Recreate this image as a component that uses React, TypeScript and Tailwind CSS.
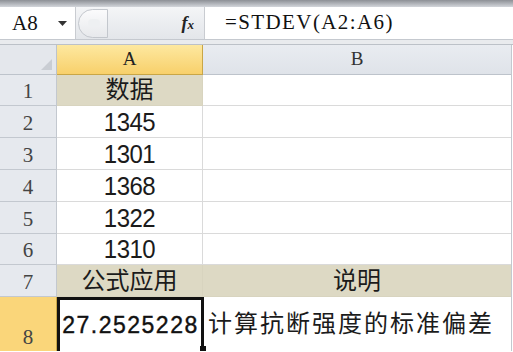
import React from 'react';

const serif = 'font-[family-name:Liberation_Serif,Times_New_Roman,serif]';
const cjk = 'font-[family-name:Liberation_Sans,Noto_Sans_CJK_SC,sans-serif]';

const rows: { n: number; a: string; b: string; h: string; fillA?: boolean; fillB?: boolean }[] = [
  { n: 1, a: '数据', b: '', h: 'h-[31px]', fillA: true },
  { n: 2, a: '1345', b: '', h: 'h-[32px]' },
  { n: 3, a: '1301', b: '', h: 'h-[32px]' },
  { n: 4, a: '1368', b: '', h: 'h-[32px]' },
  { n: 5, a: '1322', b: '', h: 'h-[32px]' },
  { n: 6, a: '1310', b: '', h: 'h-[31px]' },
  { n: 7, a: '公式应用', b: '说明', h: 'h-[32px]', fillA: true, fillB: true },
];

function CellText({ text }: { text: string }) {
  const isNum = /^\d+$/.test(text);
  if (isNum) {
    return (
      <span className="inline-block scale-y-[1.1] text-[24px] tracking-[-0.5px] text-[#1b1b1b] leading-none">
        {text}
      </span>
    );
  }
  return <span className="text-[24px] text-[#1b1b1b] leading-none">{text}</span>;
}

export default function App() {
  return (
    <div className={`w-[513px] h-[352px] overflow-hidden bg-white ${cjk}`}>
      {/* window chrome strip */}
      <div className="h-[7px] bg-gradient-to-b from-[#8d9096] to-[#d3d6db]" />

      {/* formula bar */}
      <div className="flex h-[33px] bg-[#eceef1] border-b border-[#c5c9cf]">
        <div className="flex w-[76px] items-center justify-between border-r border-[#c9ccd1] bg-white pl-[12px] pr-[8px]">
          <span className={`${serif} text-[21px] text-[#111] leading-none`}>A8</span>
          <svg width="9" height="5" viewBox="0 0 9 5">
            <path d="M0 0h9L4.5 5z" fill="#333" />
          </svg>
        </div>
        <div className="relative flex flex-1 items-center justify-end pr-[10px] bg-gradient-to-b from-[#f4f5f7] to-[#e3e6ea]">
          <div className="absolute left-[2px] top-[2px] h-[29px] w-[30px] rounded-l-full border border-[#c3c7cd] bg-gradient-to-b from-[#fbfbfc] to-[#e7e9ec]">
            <div className="absolute left-[9px] top-[9px] h-[8px] w-[12px] rounded-full bg-[#eef0f2]" />
          </div>
          <span className={`${serif} italic font-bold text-[18px] text-[#222] leading-none`}>
            f<span className="text-[13px]">x</span>
          </span>
        </div>
        <div className={`flex w-[309px] items-center border-l border-[#c9ccd1] bg-white pl-[20px] ${serif} text-[21px] tracking-[1.4px] text-[#111]`}>
          =STDEV(A2:A6)
        </div>
      </div>

      <div className="h-[5px] bg-[#e9ebee] border-b border-[#bcc1c8]" />

      {/* grid */}
      <div className="flex">
        <div className="w-[511px]">
          {/* column header */}
          <div className="flex h-[30px]">
            <div className="relative w-[57px] border-r border-b border-[#bdc3cb] bg-[#e4e7ec]">
              <svg className="absolute right-[4px] bottom-[4px]" width="11" height="11" viewBox="0 0 11 11">
                <path d="M11 0V11H0z" fill="#c9cdd3" />
              </svg>
            </div>
            <div className={`flex w-[146px] items-center justify-center border-r border-b border-[#c9a646] bg-gradient-to-b from-[#fde89f] to-[#f8d06a] ${serif} text-[19px] text-[#222]`}>
              A
            </div>
            <div className={`flex flex-1 items-center justify-center border-b border-[#bdc3cb] bg-gradient-to-b from-[#e9ecf1] to-[#dfe3e9] ${serif} text-[19px] text-[#333]`}>
              B
            </div>
          </div>

          {rows.map((r) => (
            <div key={r.n} className={`flex ${r.h}`}>
              <div className={`flex w-[57px] items-end justify-center pb-[3px] border-r border-b border-[#c3c8cf] bg-[#e6e9ee] ${serif} text-[21px] text-[#444] leading-none`}>
                {r.n}
              </div>
              <div className={`flex w-[146px] items-center justify-center border-r border-b ${r.fillA ? 'bg-[#ddd9c4] border-[#d8d4bf]' : 'bg-white border-[#dadada]'}`}>
                <CellText text={r.a} />
              </div>
              <div className={`flex flex-1 items-center justify-center border-b ${r.fillB ? 'bg-[#ddd9c4] border-[#d8d4bf]' : 'bg-white border-[#dadada]'}`}>
                {r.b && <CellText text={r.b} />}
              </div>
            </div>
          ))}

          {/* active row 8 */}
          <div className="flex h-[54px]">
            <div className={`flex w-[57px] items-end justify-center pb-[3px] border-r border-[#c9a646] bg-[#fad67a] ${serif} text-[21px] text-[#444] leading-none`}>
              8
            </div>
            <div className="relative flex w-[147px] -mr-px items-center justify-center border-[3px] border-b-0 border-[#111] bg-white">
              <span className="text-[23px] font-medium text-[#111] tracking-[1.5px] leading-none [-webkit-text-stroke:0.4px_#111]">
                27.2525228
              </span>
              <div className="absolute -right-[5px] bottom-0 h-[5px] w-[6px] bg-[#111]" />
            </div>
            <div className="flex flex-1 items-center pl-[5px] bg-white">
              <span className="text-[24px] tracking-[2px] text-[#1b1b1b] leading-none">计算抗断强度的标准偏差</span>
            </div>
          </div>
        </div>
        <div className="w-[2px] border-l border-[#c3c8cf] bg-white" />
      </div>
    </div>
  );
}
